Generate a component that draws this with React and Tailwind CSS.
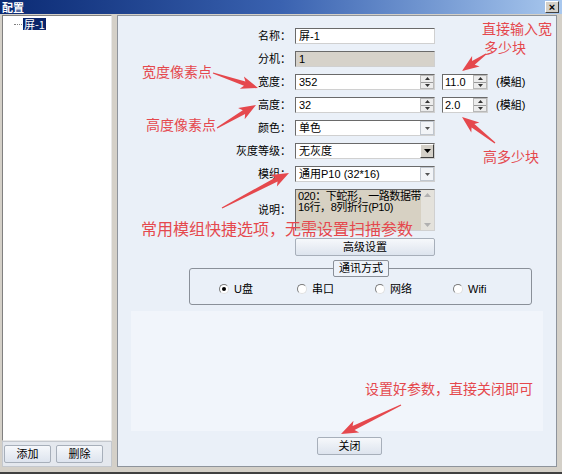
import React from "react";

const RED = "#e5484d";

function arrowPoints(x1, y1, x2, y2, o = {}) {
  const { tail = 1.2, neck = 4.5, head = 13, hl = 14 } = o;
  const dx = x2 - x1, dy = y2 - y1;
  const len = Math.hypot(dx, dy);
  const ux = dx / len, uy = dy / len;
  const nx = -uy, ny = ux;
  const bx = x2 - ux * hl, by = y2 - uy * hl;
  const gx = x2 - ux * (hl + 3), gy = y2 - uy * (hl + 3);
  const p = [
    [x1 + nx * tail / 2, y1 + ny * tail / 2],
    [bx + nx * neck / 2, by + ny * neck / 2],
    [gx + nx * head / 2, gy + ny * head / 2],
    [x2, y2],
    [gx - nx * head / 2, gy - ny * head / 2],
    [bx - nx * neck / 2, by - ny * neck / 2],
    [x1 - nx * tail / 2, y1 - ny * tail / 2],
  ];
  return p.map((q) => q[0].toFixed(1) + "," + q[1].toFixed(1)).join(" ");
}

function Arrows() {
  const list = [
    [213, 73, 258, 88],
    [217, 128, 256, 105],
    [486, 54, 462, 71],
    [495, 143, 462, 117],
    [222, 208, 289, 173],
    [401, 405, 341, 434],
  ];
  return (
    <svg className="absolute left-0 top-0 pointer-events-none" width="562" height="474">
      {list.map((a, i) => (
        <polygon key={i} points={arrowPoints(a[0], a[1], a[2], a[3])} fill={RED} />
      ))}
    </svg>
  );
}

function Note({ className, children }) {
  return (
    <div
      className={
        "absolute whitespace-nowrap font-['Noto_Sans_CJK_SC',sans-serif] text-[#e5484d] leading-none " +
        className
      }
    >
      {children}
    </div>
  );
}

function Spin() {
  return (
    <div className="flex flex-col w-[14px] h-full border border-[#b8b8b8] bg-[#ececec]">
      <div className="flex-1 flex items-center justify-center border-b border-[#9a9a9a]">
        <svg width="5" height="3">
          <path d="M0 3L2.5 0L5 3Z" fill="#333" />
        </svg>
      </div>
      <div className="flex-1 flex items-center justify-center">
        <svg width="5" height="3">
          <path d="M0 0L2.5 3L5 0Z" fill="#333" />
        </svg>
      </div>
    </div>
  );
}

function Field({ children, className = "", bg = "bg-white" }) {
  return (
    <div
      className={
        "h-[16px] flex items-center border border-t-[#6a6a6a] border-l-[#6a6a6a] border-r-[#d0d0d0] border-b-[#d0d0d0] " +
        bg +
        " " +
        className
      }
    >
      {children}
    </div>
  );
}

function Row({ label, children, h = "h-[16px]" }) {
  return (
    <div className={"flex items-center " + h}>
      <div className="w-[173px] text-right pr-0 leading-none">{label}</div>
      <div className="ml-[4px] flex items-center h-full">{children}</div>
    </div>
  );
}

function DropLight() {
  return (
    <div className="w-[14px] h-[14px] border border-[#c0c6ce] bg-[#f2f4f7] flex items-center justify-center">
      <svg width="5" height="3">
        <path d="M0 0L2.5 3L5 0Z" fill="#555" />
      </svg>
    </div>
  );
}

function Radio({ label, checked }) {
  return (
    <div className="w-[84px] flex items-center gap-[5px]">
      <div className="w-[10px] h-[10px] rounded-full border border-t-[#7a7a7a] border-l-[#7a7a7a] border-r-[#e0e0e0] border-b-[#e0e0e0] bg-white flex items-center justify-center">
        {checked && <div className="w-[4px] h-[4px] rounded-full bg-black" />}
      </div>
      <span className="leading-none text-[11px]">{label}</span>
    </div>
  );
}

function Btn({ children, className = "" }) {
  return (
    <div
      className={
        "flex items-center justify-center rounded-[2px] border border-[#a7afba] bg-linear-to-b from-[#f6f8fb] to-[#dde4ee] text-[11px] leading-none " +
        className
      }
    >
      {children}
    </div>
  );
}

export default function App() {
  return (
    <div className="relative w-[562px] h-[474px] overflow-hidden bg-[#d4d0c8] flex flex-col font-['Liberation_Sans','Noto_Sans_CJK_SC',sans-serif] text-[12px] text-black border-b-2 border-b-[#404040]">
      {/* title bar */}
      <div className="h-[14px] shrink-0 flex items-center justify-between bg-linear-to-r from-[#0b2a74] via-[#3a62b0] to-[#a9c8ee]">
        <span className="pl-[2px] text-white font-bold text-[11px] leading-[13px] font-['Noto_Sans_CJK_SC',sans-serif]">
          配置
        </span>
        <div className="mr-[3px] w-[14px] h-[12px] bg-[#d4d0c8] border border-t-white border-l-white border-r-[#404040] border-b-[#404040] flex items-center justify-center text-[11px] font-bold leading-none">
          ×
        </div>
      </div>

      {/* body */}
      <div className="flex flex-1 pl-[2px] pr-[5px] pt-[1px] pb-[5px] gap-[5px]">
        {/* left */}
        <div className="w-[110px] flex flex-col">
          <div className="flex-1 bg-white border border-t-[#808080] border-l-[#808080] border-r-[#e8e8e8] border-b-[#e8e8e8] pt-[2px]">
            <div className="flex items-center h-[12px]">
              <div className="ml-[11px] w-[8px] border-t border-dotted border-[#808080]" />
              <span className="ml-[1px] px-[1px] bg-[#0a246a] text-white text-[11px] leading-[12px] font-['Noto_Sans_CJK_SC',sans-serif]">
                屏-1
              </span>
            </div>
          </div>
          <div className="h-[26px] flex items-center gap-[5px] pl-[1px] border border-[#c4c8ce] bg-[#e4e8ee]">
            <Btn className="w-[47px] h-[18px]">添加</Btn>
            <Btn className="w-[47px] h-[18px]">删除</Btn>
          </div>
        </div>

        {/* right */}
        <div className="flex-1 flex flex-col border border-[#8e949c] bg-[#eaf0f8] pt-[12px] text-[11px]">
          <div className="flex flex-col gap-[7px]">
            <Row label="名称：">
              <Field className="w-[140px] pl-[3px]">屏-1</Field>
            </Row>
            <Row label="分机：">
              <Field className="w-[140px] pl-[3px]" bg="bg-[#d6d2ca]">1</Field>
            </Row>
            <Row label="宽度：">
              <Field className="w-[140px] pl-[3px] justify-between">
                <span>352</span>
                <Spin />
              </Field>
              <Field className="ml-[7px] w-[46px] pl-[2px] justify-between">
                <span>11.0</span>
                <Spin />
              </Field>
              <span className="ml-[8px]">(模組)</span>
            </Row>
            <Row label="高度：">
              <Field className="w-[140px] pl-[3px] justify-between">
                <span>32</span>
                <Spin />
              </Field>
              <Field className="ml-[7px] w-[46px] pl-[2px] justify-between">
                <span>2.0</span>
                <Spin />
              </Field>
              <span className="ml-[8px]">(模組)</span>
            </Row>
            <Row label="颜色：">
              <Field className="w-[140px] pl-[3px] justify-between">
                <span>单色</span>
                <DropLight />
              </Field>
            </Row>
            <Row label="灰度等级：">
              <Field className="w-[140px] pl-[3px] justify-between">
                <span>无灰度</span>
                <div className="w-[14px] h-[14px] bg-[#d4d0c8] border border-t-white border-l-white border-r-[#404040] border-b-[#404040] flex items-center justify-center">
                  <svg width="7" height="4">
                    <path d="M0 0L3.5 4L7 0Z" fill="#000" />
                  </svg>
                </div>
              </Field>
            </Row>
            <Row label="模组：">
              <Field className="w-[140px] pl-[3px] justify-between">
                <span>通用P10 (32*16)</span>
                <DropLight />
              </Field>
            </Row>
            <Row label="说明：" h="h-[42px]">
              <div className="w-[140px] h-[42px] flex border border-t-[#6a6a6a] border-l-[#6a6a6a] border-r-[#d0d0d0] border-b-[#d0d0d0] bg-[#d7d1c3]">
                <div className="flex-1 pl-[2px] pt-[1px] text-[11px] leading-[11px] whitespace-pre tracking-[-0.4px]">
                  {"020：下蛇形，一路数据带\n16行，8列折行(P10)"}
                </div>
                <div className="w-[13px] bg-[#e4e2dc] flex flex-col justify-between items-center py-[3px]">
                  <svg width="7" height="4">
                    <path d="M0 4L3.5 0L7 4Z" fill="#b0b0b0" />
                  </svg>
                  <svg width="7" height="4">
                    <path d="M0 0L3.5 4L7 0Z" fill="#b0b0b0" />
                  </svg>
                </div>
              </div>
            </Row>
            <Row label="" h="h-[18px]">
              <Btn className="w-[140px] h-[18px]">高级设置</Btn>
            </Row>
          </div>

          {/* group box */}
          <div className="relative ml-[71px] mt-[12px] w-[343px] h-[37px] border border-[#8a9099] rounded-[3px] flex items-center pl-[29px] pt-[5px]">
            <div className="absolute left-[143px] top-[-9px] w-[56px] h-[17px] border border-[#8a9099] rounded-[2px] bg-[#eef3fa] flex items-center justify-center text-[11px] leading-none">
              通讯方式
            </div>
            <Radio label="U盘" checked />
            <Radio label="串口" />
            <Radio label="网络" />
            <Radio label="Wifi" />
          </div>

          <div className="mx-[13px] mt-[6px] h-[120px] bg-[#f1f5fb]" />

          <div className="mt-[6px] ml-[199px]">
            <Btn className="w-[65px] h-[18px]">关闭</Btn>
          </div>
        </div>
      </div>

      {/* annotations */}
      <Arrows />
      <Note className="left-[482px] top-[21px] text-[14px]">直接输入宽</Note>
      <Note className="left-[484px] top-[40px] text-[14px]">多少块</Note>
      <Note className="left-[142px] top-[64px] text-[14px]">宽度像素点</Note>
      <Note className="left-[146px] top-[117px] text-[14px]">高度像素点</Note>
      <Note className="left-[483px] top-[149px] text-[14px]">高多少块</Note>
      <Note className="left-[141px] top-[220px] text-[16px]">常用模组快捷选项，无需设置扫描参数</Note>
      <Note className="left-[365px] top-[381px] text-[14px]">设置好参数，直接关闭即可</Note>
    </div>
  );
}
